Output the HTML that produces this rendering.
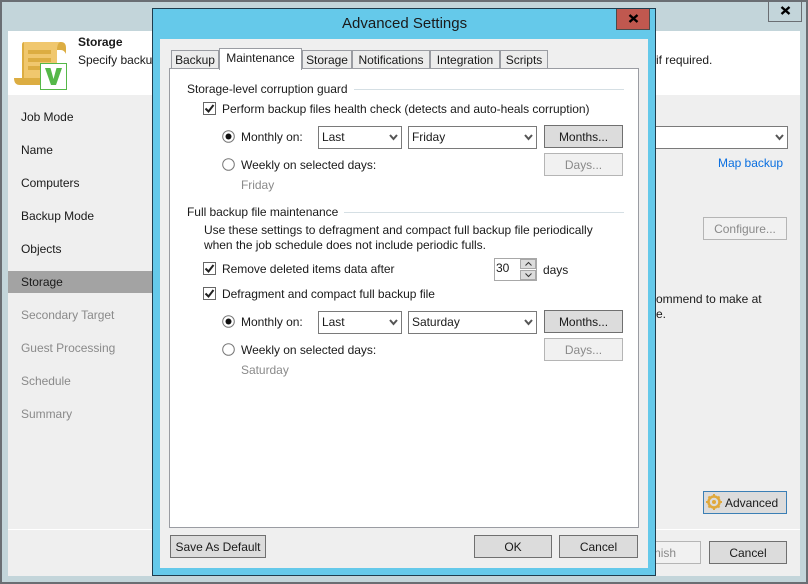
<!DOCTYPE html>
<html><head><meta charset="utf-8"><style>
html,body{margin:0;padding:0;width:808px;height:584px;overflow:hidden;background:#c3d5da}
body{position:relative;font-family:"Liberation Sans",sans-serif;font-size:12px;color:#1a1a1a}
.a{position:absolute;box-sizing:border-box}
.t{position:absolute;white-space:nowrap;line-height:14px;letter-spacing:-.03px}
.g{color:#8a8a8a}
.b{position:absolute;box-sizing:border-box;background:#dcdcdc;border:1px solid #707070;text-align:center;line-height:22px;white-space:nowrap;letter-spacing:-.03px}
.d{background:#f1f1f1;border-color:#b5b5b5;color:#8a8a8a}
.s{position:absolute;box-sizing:border-box;background:#fff;border:1px solid #7a7a7a;line-height:20px;padding-left:3px;height:23px;letter-spacing:-.03px}
.s svg{position:absolute;right:3px;top:7px}
.tab{position:absolute;box-sizing:border-box;background:#ececec;border:1px solid #9a9ca2;border-bottom:0;top:50px;height:18px;text-align:center;line-height:18px;letter-spacing:-.03px}
svg{position:absolute;overflow:visible}
</style></head><body>
<div class="a" style="left:0;top:0;width:808px;height:2px;background:#6a6e73"></div>
<div class="a" style="left:0;top:0;width:2px;height:584px;background:#6a6e73"></div>
<div class="a" style="left:806px;top:0;width:2px;height:584px;background:#6a6e73"></div>
<div class="a" style="left:0;top:582px;width:808px;height:2px;background:#6a6e73"></div>
<div class="a" style="left:768px;top:0;width:34px;height:22px;border:1px solid #6a6e73;border-top:0"></div>
<svg style="left:780px;top:6px" width="11" height="9"><path d="M1.500 1L9.500 8M9.500 1L1.500 8" fill="none" stroke="#000" stroke-width="2.400"/></svg>

<div class="a" style="left:8px;top:31px;width:792px;height:545px;background:#efefef"></div>
<div class="a" style="left:8px;top:31px;width:792px;height:64px;background:#fff"></div>
<svg style="left:14px;top:42px" width="54" height="48" viewBox="0 0 54 48">
<path d="M38 0H47Q52 0 52 6V12Q50 8 47 8H43V10H38Z" fill="#dcad42"/>
<path d="M8 3Q8 0 11 0H46Q43 2 43 8V36H8Z" fill="#f0c76e"/>
<path d="M8 3Q8 0 10 0V36H8Z" fill="#dcad42"/>
<path d="M0 36H30V43H6Q0 43 0 36Z" fill="#dcad42"/>
<path d="M14 8H37V12H14ZM14 16H37V20H14ZM14 24H37V28H14Z" fill="#dcad42"/>
<rect x="26.500" y="21.500" width="26" height="26" fill="#fff" stroke="#55b848"/>
<path d="M31 26H36.500L39.500 37L42.500 26H48L42 43H37Z" fill="#55b848"/>
</svg>
<div class="t" style="left:78px;top:35px;font-weight:bold">Storage</div>
<div class="t" style="left:78px;top:53px">Specify backu</div>
<div class="t" style="left:656px;top:53px">if required.</div>

<div class="a" style="left:8px;top:271px;width:144px;height:22px;background:#a3a3a3"></div>
<div class="t" style="left:21px;top:110px">Job Mode</div>
<div class="t" style="left:21px;top:143px">Name</div>
<div class="t" style="left:21px;top:176px">Computers</div>
<div class="t" style="left:21px;top:209px">Backup Mode</div>
<div class="t" style="left:21px;top:242px">Objects</div>
<div class="t" style="left:21px;top:275px">Storage</div>
<div class="t g" style="left:21px;top:308px">Secondary Target</div>
<div class="t g" style="left:21px;top:341px">Guest Processing</div>
<div class="t g" style="left:21px;top:374px">Schedule</div>
<div class="t g" style="left:21px;top:407px">Summary</div>

<div class="s" style="left:640px;top:126px;width:148px"><svg width="9" height="7"><path d="M1 1L4.500 5L8 1" fill="none" stroke="#555" stroke-width="2"/></svg></div>
<div class="t" style="left:718px;top:156px;color:#0a6fe0">Map backup</div>
<div class="b d" style="left:703px;top:217px;width:84px;height:23px">Configure...</div>
<div class="t" style="left:656px;top:292px">ommend to make at</div>
<div class="t" style="left:656px;top:307px">e.</div>
<div class="b" style="left:703px;top:491px;width:84px;height:23px;border-color:#3b7fb5;text-align:left;padding-left:21px">Advanced</div>
<svg style="left:706px;top:494px" width="16" height="16" viewBox="0 0 16 16"><circle cx="8" cy="8" r="5.500" fill="none" stroke="#e0a93c" stroke-width="2.500"/><circle cx="8" cy="8" r="2" fill="#e0a93c"/><path d="M8 0V16M0 8H16M2.500 2.500L13.500 13.500M13.500 2.500L2.500 13.500" stroke="#e0a93c" stroke-width="2" stroke-dasharray="3 10 3"/></svg>
<div class="a" style="left:8px;top:529px;width:792px;height:1px;background:#fff"></div>
<div class="b d" style="left:600px;top:541px;width:101px;height:23px;text-align:right;padding-right:24px">Finish</div>
<div class="b" style="left:709px;top:541px;width:78px;height:23px">Cancel</div>

<!-- dialog -->
<div class="a" style="left:152px;top:8px;width:504px;height:568px;background:#65c9ea;border:1px solid #1f3c4d"></div>
<div class="t" style="left:342px;top:15px;font-size:15px;line-height:18px;letter-spacing:0">Advanced Settings</div>
<div class="a" style="left:616px;top:9px;width:34px;height:21px;background:#c0584f;border:1px solid #4b4b4b;border-top:0"></div>
<svg style="left:628px;top:14px" width="11" height="9"><path d="M1.500 1L9.500 8M9.500 1L1.500 8" fill="none" stroke="#000" stroke-width="2.400"/></svg>
<div class="a" style="left:160px;top:39px;width:488px;height:529px;background:#efefef"></div>

<div class="tab" style="left:171px;width:48px">Backup</div>
<div class="tab" style="left:302px;width:50px">Storage</div>
<div class="tab" style="left:352px;width:78px">Notifications</div>
<div class="tab" style="left:430px;width:70px">Integration</div>
<div class="tab" style="left:500px;width:48px">Scripts</div>
<div class="a" style="left:169px;top:68px;width:470px;height:460px;background:#fff;border:1px solid #9a9ca2"></div>
<div class="tab" style="left:219px;top:48px;width:83px;height:22px;background:#fff;line-height:19px;z-index:2">Maintenance</div>

<div class="t" style="left:187px;top:82px">Storage-level corruption guard</div>
<div class="a" style="left:354px;top:89px;width:270px;height:1px;background:#d5dfe4"></div>
<svg style="left:203px;top:102px" width="13" height="13"><rect x=".5" y=".5" width="12" height="12" fill="#fff" stroke="#666"/><path d="M2.500 6.500L5.500 9.500L10.500 3" fill="none" stroke="#222" stroke-width="2"/></svg>
<div class="t" style="left:222px;top:102px">Perform backup files health check (detects and auto-heals corruption)</div>

<svg style="left:222px;top:130px" width="13" height="13"><circle cx="6.500" cy="6.500" r="5.800" fill="#fff" stroke="#777"/><circle cx="6.500" cy="6.500" r="3" fill="#111"/></svg>
<div class="t" style="left:241px;top:130px">Monthly on:</div>
<div class="s" style="left:318px;top:126px;width:84px">Last<svg width="9" height="7"><path d="M1 1L4.500 5L8 1" fill="none" stroke="#555" stroke-width="2"/></svg></div>
<div class="s" style="left:408px;top:126px;width:129px">Friday<svg width="9" height="7"><path d="M1 1L4.500 5L8 1" fill="none" stroke="#555" stroke-width="2"/></svg></div>
<div class="b" style="left:544px;top:125px;width:79px;height:23px">Months...</div>
<svg style="left:222px;top:158px" width="13" height="13"><circle cx="6.500" cy="6.500" r="5.800" fill="#fff" stroke="#777"/></svg>
<div class="t" style="left:241px;top:158px">Weekly on selected days:</div>
<div class="b d" style="left:544px;top:153px;width:79px;height:23px">Days...</div>
<div class="t g" style="left:241px;top:178px">Friday</div>

<div class="t" style="left:187px;top:205px">Full backup file maintenance</div>
<div class="a" style="left:344px;top:212px;width:280px;height:1px;background:#d5dfe4"></div>
<div class="t" style="left:204px;top:223px">Use these settings to defragment and compact full backup file periodically</div>
<div class="t" style="left:204px;top:238px">when the job schedule does not include periodic fulls.</div>

<svg style="left:203px;top:262px" width="13" height="13"><rect x=".5" y=".5" width="12" height="12" fill="#fff" stroke="#666"/><path d="M2.500 6.500L5.500 9.500L10.500 3" fill="none" stroke="#222" stroke-width="2"/></svg>
<div class="t" style="left:222px;top:262px">Remove deleted items data after</div>
<div class="a" style="left:494px;top:258px;width:43px;height:23px;background:#fff;border:1px solid #a8a8a8"></div>
<div class="t" style="left:496px;top:261px">30</div>
<div class="a" style="left:520px;top:259px;width:16px;height:10px;background:#dcdcdc;border:1px solid #a8a8a8"></div>
<div class="a" style="left:520px;top:270px;width:16px;height:10px;background:#dcdcdc;border:1px solid #a8a8a8"></div>
<svg style="left:525px;top:262px" width="7" height="4"><path d="M.5 3.500L3.500 .5L6.500 3.500" fill="none" stroke="#333"/></svg>
<svg style="left:525px;top:273px" width="7" height="4"><path d="M.5 .5L3.500 3.500L6.500 .5" fill="none" stroke="#333"/></svg>
<div class="t" style="left:543px;top:263px">days</div>

<svg style="left:203px;top:287px" width="13" height="13"><rect x=".5" y=".5" width="12" height="12" fill="#fff" stroke="#666"/><path d="M2.500 6.500L5.500 9.500L10.500 3" fill="none" stroke="#222" stroke-width="2"/></svg>
<div class="t" style="left:222px;top:287px">Defragment and compact full backup file</div>

<svg style="left:222px;top:315px" width="13" height="13"><circle cx="6.500" cy="6.500" r="5.800" fill="#fff" stroke="#777"/><circle cx="6.500" cy="6.500" r="3" fill="#111"/></svg>
<div class="t" style="left:241px;top:315px">Monthly on:</div>
<div class="s" style="left:318px;top:311px;width:84px">Last<svg width="9" height="7"><path d="M1 1L4.500 5L8 1" fill="none" stroke="#555" stroke-width="2"/></svg></div>
<div class="s" style="left:408px;top:311px;width:129px">Saturday<svg width="9" height="7"><path d="M1 1L4.500 5L8 1" fill="none" stroke="#555" stroke-width="2"/></svg></div>
<div class="b" style="left:544px;top:310px;width:79px;height:23px">Months...</div>
<svg style="left:222px;top:343px" width="13" height="13"><circle cx="6.500" cy="6.500" r="5.800" fill="#fff" stroke="#777"/></svg>
<div class="t" style="left:241px;top:343px">Weekly on selected days:</div>
<div class="b d" style="left:544px;top:338px;width:79px;height:23px">Days...</div>
<div class="t g" style="left:241px;top:363px">Saturday</div>

<div class="b" style="left:170px;top:535px;width:96px;height:23px">Save As Default</div>
<div class="b" style="left:474px;top:535px;width:78px;height:23px">OK</div>
<div class="b" style="left:559px;top:535px;width:79px;height:23px">Cancel</div>
</body></html>
